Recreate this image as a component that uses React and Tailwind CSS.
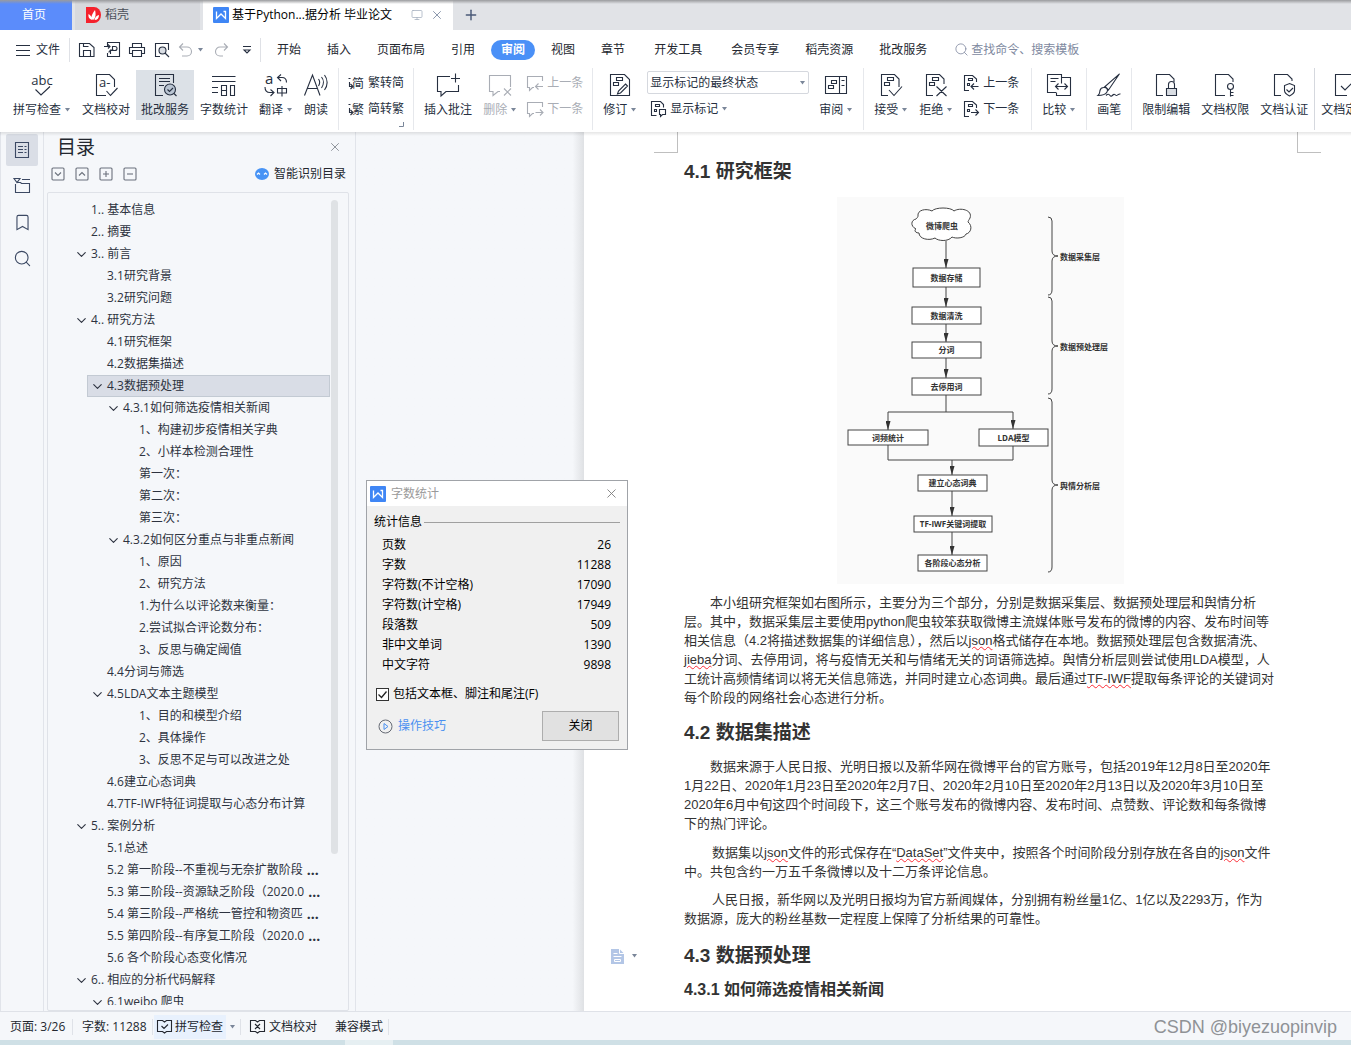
import React from "react";
import { X, Plus, Search, ChevronDown, Bookmark, Monitor } from "lucide-react";
import clsx from "clsx";

const OUTLINE = [
  { level: 1, text: "1.. 基本信息" },
  { level: 1, text: "2.. 摘要" },
  { level: 1, text: "3.. 前言", open: true },
  { level: 2, text: "3.1研究背景" },
  { level: 2, text: "3.2研究问题" },
  { level: 1, text: "4.. 研究方法", open: true },
  { level: 2, text: "4.1研究框架" },
  { level: 2, text: "4.2数据集描述" },
  { level: 2, text: "4.3数据预处理", open: true, selected: true },
  { level: 3, text: "4.3.1如何筛选疫情相关新闻", open: true },
  { level: 4, text: "1、构建初步疫情相关字典" },
  { level: 4, text: "2、小样本检测合理性" },
  { level: 4, text: "第一次：" },
  { level: 4, text: "第二次：" },
  { level: 4, text: "第三次：" },
  { level: 3, text: "4.3.2如何区分重点与非重点新闻", open: true },
  { level: 4, text: "1、原因" },
  { level: 4, text: "2、研究方法" },
  { level: 4, text: "1.为什么以评论数来衡量：" },
  { level: 4, text: "2.尝试拟合评论数分布：" },
  { level: 4, text: "3、反思与确定阈值" },
  { level: 2, text: "4.4分词与筛选" },
  { level: 2, text: "4.5LDA文本主题模型", open: true },
  { level: 4, text: "1、目的和模型介绍" },
  { level: 4, text: "2、具体操作" },
  { level: 4, text: "3、反思不足与可以改进之处" },
  { level: 2, text: "4.6建立心态词典" },
  { level: 2, text: "4.7TF-IWF特征词提取与心态分布计算" },
  { level: 1, text: "5.. 案例分析", open: true },
  { level: 2, text: "5.1总述" },
  { level: 2, text: "5.2 第一阶段--不重视与无奈扩散阶段", more: true },
  { level: 2, text: "5.3 第二阶段--资源缺乏阶段（2020.0", more: true },
  { level: 2, text: "5.4 第三阶段--严格统一管控和物资匹", more: true },
  { level: 2, text: "5.5 第四阶段--有序复工阶段（2020.0", more: true },
  { level: 2, text: "5.6 各个阶段心态变化情况" },
  { level: 1, text: "6.. 相应的分析代码解释", open: true },
  { level: 2, text: "6.1weibo 爬虫", open: true },
];

const INDENT = {
  1: "ml-[23px]",
  2: "ml-[39px]",
  3: "ml-[55px]",
  4: "ml-[71px]",
};

const STATS = [
  ["页数", "26"],
  ["字数", "11288"],
  ["字符数(不计空格)", "17090"],
  ["字符数(计空格)", "17949"],
  ["段落数", "509"],
  ["非中文单词", "1390"],
  ["中文字符", "9898"],
];

const Svg = ({ size = 24, box = 24, children, className = "" }) => (
  <svg
    width={size}
    height={size}
    viewBox={`0 0 ${box} ${box}`}
    fill="none"
    stroke="currentColor"
    strokeWidth="1.1"
    className={clsx("shrink-0 overflow-visible", className)}
    aria-hidden="true"
  >
    {children}
  </svg>
);

const Caret = () => (
  <svg width="7" height="4" viewBox="0 0 7 4" className="ml-[3px] shrink-0" aria-hidden="true">
    <path d="M1 0h5L3.5 3.5z" fill="#7a8699" />
  </svg>
);

// Large ribbon icons, 24px grid
const SpellIcon = () => (
  <Svg>
    <text x="12" y="12" textAnchor="middle" fontSize="13" fill="currentColor" stroke="none">abc</text>
    <path d="M5.500 16.500l5.500 5.500 9-8.500" />
  </Svg>
);
const ProofIcon = () => (
  <Svg>
    <path d="M12 22.500H2.500v-21h13l5 5V14" />
    <text x="5" y="14" fontSize="13" fill="currentColor" stroke="none">a-</text>
    <path d="M12.500 18l4 4.500 7-7.500" />
  </Svg>
);
const ReviewServiceIcon = () => (
  <Svg>
    <path d="M10 22.500H2.500v-21h18V10M6 5.500h11M6 8.500h11M6 12.500h5" />
    <circle cx="17" cy="16.500" r="5.500" fill="#b9c4d2" />
    <path d="M14.500 16.500l2 2 3.500-3.500M21 20.500l2.500 2.500" />
  </Svg>
);
const CountIcon = () => (
  <Svg>
    <path d="M0 3.500h23.500M0 8.500h23.500M0 14.500h6M0 19.500h6M9.500 12v10.500h5V12.500h-5M9.500 17.500h5M18.500 12.500h4v10h-4z" />
  </Svg>
);
const TranslateIcon = () => (
  <Svg>
    <text x="1" y="11" fontSize="15" fill="currentColor" stroke="none">a</text>
    <path d="M17 1.500l-3.500 3 3.500 3.500M13.500 4.500h4.500c3 0 4.500 2 4.500 5M1 14c0 4 2 5.500 5 5.500h3.500M6.500 16.500l3.500 3-3.500 3.500M13.500 15.500h9v4.500h-9zM18 13v10.500" />
  </Svg>
);
const ReadIcon = () => (
  <Svg>
    <path d="M.5 22.500L8.500 2l7.500 20.500M3.500 15.500h10M14.500 6c1.500 2 1.500 4.500 0 7M17.500 4c2.500 3 2.500 7.500 0 11M20.500 2c3.500 4.500 3.500 10.500 0 15" />
  </Svg>
);
const AddCommentIcon = () => (
  <Svg>
    <path d="M14 3.500H1.500v15H5v4.500l5-4.500h12.500V12M19.500 .5v9M15 5.500h9" />
  </Svg>
);
const DeleteCommentIcon = () => (
  <Svg>
    <path d="M12 18.500h-2l-5 4v-4H1.500v-16h21V14M16 15.500l7 7M23 15.500l-7 7" />
  </Svg>
);
const TrackIcon = () => (
  <Svg>
    <path d="M21.500 12V6.500l-5-5h-14v21h19V12M8.500 4.500h6v3h-6zM5.500 9.500h5v3h-5zM17.500 11l2 2-7 7-3 1 1-3z" />
  </Svg>
);
const PaneIcon = () => (
  <Svg>
    <path d="M1.500 3.500h21v17h-21zM15.500 3.500v17M7.500 7.500h5v3h-5zM4.500 12.500h5v3h-5zM17.500 7.500h3M17.500 12.500h3" />
  </Svg>
);
const AcceptIcon = () => (
  <Svg>
    <path d="M9 22.500H2.500v-21h13l4.500 4.500v8M8.500 4.500h6v3h-6zM5.500 9.500h5v3h-5zM10 17l5 5.500 8-9" />
  </Svg>
);
const RejectIcon = () => (
  <Svg>
    <path d="M9 22.500H2.500v-21h13l4.500 4.500v5M8.500 4.500h6v3h-6zM5.500 9.500h5v3h-5zM12.500 13.500l10 9.500M22.500 13.500l-10 9.500" />
  </Svg>
);
const CompareIcon = () => (
  <Svg>
    <path d="M14.500 4.500V1.500H.5v18H9M9.500 19.500v3h14v-18h-9v6M3.500 5.500h8M3.500 8.500h5M8.500 13.500h12M11.500 10.500l-3 3 3 3M17.500 10.500l3 3-3 3" />
  </Svg>
);
const BrushIcon = () => (
  <Svg>
    <path d="M22.500.8L8 13.500l3.500 3.500zM6.500 14.500c3-.5 5 2 3.500 4.500-1.500 2.500-5 3.500-9 3.500 2-1.500 1.500-3 2-5 .4-1.700 1.800-2.800 3.500-3zM9 22.500c2-2 3-1.500 4 0s2.500 0 3.500-1 2 1 3 1 2-2 4-1.500" />
  </Svg>
);
const LockDocIcon = () => (
  <Svg>
    <path d="M9 22.500H2.500v-21h13l4.500 4.500v3" />
    <path d="M14.500 15v-3.500a3 3 0 016 0V15" />
    <path d="M12.500 15.500h10v7h-10z" fill="#d9dde3" />
  </Svg>
);
const KeyDocIcon = () => (
  <Svg>
    <path d="M12 22.500H2.500v-21h13l4.500 4.500v3" />
    <circle cx="17.500" cy="13.500" r="3" />
    <path d="M17.500 16.500v7M17.500 19.500h3M17.500 22.500h3" />
  </Svg>
);
const ShieldDocIcon = () => (
  <Svg>
    <path d="M9 22.500H2.500v-21h13l4.500 4.500v2" />
    <path d="M17.500 10.500l5 2v5c0 2.500-2 4-5 5.500-3-1.500-5-3-5-5.500v-5zM14.500 16.500l2.500 2.500 4-4" />
  </Svg>
);
const FinalDocIcon = () => (
  <Svg>
    <path d="M14 22.500H2.500v-21h18M8 13l4 4 8-8" />
  </Svg>
);

// Small ribbon icons, 16px grid
const ConvertIcon = ({ label }) => (
  <Svg size={16} box={16}>
    <path d="M1.500 7v4.500H4M2.500 9l2.500 2.500-2.500 2.500M.5 3.500h2" />
    <text x="4" y="13" fontSize="12" fill="currentColor" stroke="none">{label}</text>
  </Svg>
);
const CommentPrevIcon = () => (
  <Svg size={16} box={16}>
    <path d="M15.500 6V1.500H.5v11h2v3l3-3h1.500M16 11.500H9M11.500 8.500l-3 3 3 3" />
  </Svg>
);
const CommentNextIcon = () => (
  <Svg size={16} box={16}>
    <path d="M15.500 6V1.500H.5v11h2v3l3-3h1.500M8.500 11.500H15.500M13 8.500l3 3-3 3" />
  </Svg>
);
const MarkupIcon = () => (
  <Svg size={16} box={16}>
    <path d="M6.500 14.500h-5v-14h9l3 3v3M5.500 3.500h4v2h-4zM4.500 8.500h2v2h-2zM9.500 8.500h6v5h-3l-2 2v-2h-1z" />
  </Svg>
);
const ChangePrevIcon = () => (
  <Svg size={16} box={16}>
    <path d="M6 15.500H1.500v-15h8l4 3.500v3M5.500 3.500h4v2h-4zM4.500 8.500h2v2h-2zM15.500 11.500H8.500M11 8.500l-3 3 3 3" />
  </Svg>
);
const ChangeNextIcon = () => (
  <Svg size={16} box={16}>
    <path d="M6 15.500H1.500v-15h8l4 3.500v3M5.500 3.500h4v2h-4zM4.500 8.500h2v2h-2zM8 11.500h7M12.500 8.500l3 3-3 3" />
  </Svg>
);

const WpsLogo = () => (
  <svg width="16" height="16" viewBox="0 0 16 16" className="shrink-0" aria-hidden="true">
    <rect width="16" height="16" rx="1" fill="#3f86f5" />
    <path d="M3.500 4.500v7l4.500-4.500 4.500 4.500v-7h-2" fill="none" stroke="#fff" strokeWidth="1.300" />
  </svg>
);

const RibbonButton = ({ icon, label, caret, active, muted }) => (
  <button
    type="button"
    className={clsx(
      "flex h-[50px] shrink-0 flex-col items-center px-[5px] pt-[3px]",
      active && "bg-[#dce1e7]",
      muted && "text-[#a9adb5]"
    )}
  >
    {icon}
    <span className="mt-[5px] flex items-center leading-4 whitespace-nowrap">
      {label}
      {caret && <Caret />}
    </span>
  </button>
);

const SmallButton = ({ icon, label, caret, muted }) => (
  <button
    type="button"
    className={clsx("flex h-[26px] items-center gap-1 whitespace-nowrap", muted && "text-[#a9adb5]")}
  >
    {icon}
    <span className="flex items-center">
      {label}
      {caret && <Caret />}
    </span>
  </button>
);

const SmallColumn = ({ children }) => <div className="flex shrink-0 flex-col px-1">{children}</div>;

const Divider = () => <div className="mx-1 -mt-0.5 h-[62px] w-px shrink-0 bg-[#e6e8ec]" />;

const TabBar = () => (
  <div className="relative flex h-[30px] shrink-0 bg-[#e1e3e7]">
    <button type="button" className="w-[72px] bg-[#5b8cfb] pr-1 text-white">首页</button>
    <button type="button" className="ml-[3px] flex w-[125px] items-center gap-1 bg-[#d7d9dd] pl-[11px] text-[#4a4f59]">
      <svg width="15" height="16" viewBox="0 0 15 16" aria-hidden="true">
        <path d="M0 0h8a7 8 0 017 8 7 8 0 01-7 8H0z" fill="#f5222d" />
        <path d="M7 13C4 11 6 7 9 3c1 4 1 8-2 10zM6 13C3 12 2 10 2.500 7 4.500 8 6 10 6 13zM8.500 13c3 0 4.500-2 4.500-5-2 .5-4 2-4.500 5z" fill="#fff" />
      </svg>
      稻壳
    </button>
    <div className="ml-[3px] flex w-[250px] items-center bg-white pl-[10px]">
      <WpsLogo />
      <span className="ml-[3px] whitespace-nowrap text-black">基于Python...据分析 毕业论文</span>
      <Monitor size={12} strokeWidth={1.5} className="ml-auto text-[#a3adbd]" />
      <button type="button" aria-label="关闭标签" className="mr-[9px] ml-[7px] text-[#8c98ad]">
        <X size={14} strokeWidth={1.7} />
      </button>
    </div>
    <button type="button" aria-label="新建" className="ml-[10px] text-[#4a5a78]">
      <Plus size={16} strokeWidth={2.2} />
    </button>
    <div className="absolute inset-x-0 top-0 h-1 bg-linear-to-b from-[#9a9b9e] to-transparent" />
  </div>
);

const MenuBar = () => (
  <div className="flex h-9 shrink-0 items-center pt-[3px] whitespace-nowrap">
    <button type="button" className="ml-4 flex items-center gap-[6px]">
      <Svg size={14} box={14}>
        <path d="M0 2.500h14M0 7.500h14M0 12.500h14" />
      </Svg>
      文件
    </button>
    <div className="mx-[9px] h-6 w-px bg-[#dfe1e6]" />
    <div className="flex w-[181px] items-center">
      <button type="button" aria-label="保存">
        <Svg size={16} box={16}>
          <path d="M.5 14.500v-13h10l4.500 4v9zM4.500 14.500v-6h7v6M4.500 1.500v3h5" />
        </Svg>
      </button>
      <button type="button" aria-label="输出为PDF" className="ml-[9px]">
        <Svg size={16} box={16}>
          <path d="M3.500 4V.500h12v14h-12V11M0 4.500h6M4 2.500l2 2-2 2M6.500 12V8h3M8.500 9V4.500H11a2 2 0 010 4H7a2 2 0 00-2 2" />
        </Svg>
      </button>
      <button type="button" aria-label="打印" className="ml-[9px]">
        <Svg size={16} box={16}>
          <path d="M3.500 5V1.500h9V5M3.500 11.500H.5V5.500h15v6h-3M3.500 8.500h9v6h-9z" />
        </Svg>
      </button>
      <button type="button" aria-label="打印预览" className="ml-[9px]">
        <Svg size={16} box={16}>
          <path d="M6 14.500H1.500v-13h13V8" />
          <circle cx="8.500" cy="8.500" r="3.500" fill="#d9dde3" />
          <path d="M11 11l4 4" />
        </Svg>
      </button>
      <button type="button" aria-label="撤销" className="ml-2 flex items-center text-[#a9adb5]">
        <Svg size={16} box={16}>
          <path d="M5 1.500L1.500 5 5 8.500M1.500 5H9a4.500 4.500 0 010 9H4" />
        </Svg>
        <Caret />
      </button>
      <button type="button" aria-label="恢复" className="ml-[9px] text-[#a9adb5]">
        <Svg size={16} box={16}>
          <path d="M11 1.500L14.500 5 11 8.500M14.500 5H7a4.500 4.500 0 000 9h3" />
        </Svg>
      </button>
      <button type="button" aria-label="更多" className="ml-3.5">
        <Svg size={8} box={8}>
          <path d="M0 .5h8M1 4h6L4 7z" />
        </Svg>
      </button>
    </div>
    <div className="h-6 w-px bg-[#dfe1e6]" />
    <nav className="ml-4 flex items-center gap-[26px] text-[#23272f]">
      <button type="button">开始</button>
      <button type="button">插入</button>
      <button type="button">页面布局</button>
      <button type="button">引用</button>
      <button type="button" className="-mx-2.5 h-5 rounded-full bg-[#4a90f7] px-2.5 font-bold text-white">审阅</button>
      <button type="button">视图</button>
      <button type="button">章节</button>
      <button type="button" className="ml-[3px]">开发工具</button>
      <button type="button" className="ml-[3px]">会员专享</button>
      <button type="button">稻壳资源</button>
      <button type="button">批改服务</button>
    </nav>
    <label className="ml-[27px] flex flex-1 items-center gap-0.5 text-[#8089a0]">
      <Search size={15} strokeWidth={1.3} />
      <input
        type="text"
        aria-label="查找命令"
        placeholder="查找命令、搜索模板"
        className="w-32 bg-transparent outline-none placeholder:text-[#8089a0]"
      />
    </label>
  </div>
);

const Ribbon = () => (
  <div className="flex h-[66px] shrink-0 gap-px overflow-hidden pt-1 pl-2 text-[#262f40]">
    <RibbonButton icon={<SpellIcon />} label="拼写检查" caret />
    <RibbonButton icon={<ProofIcon />} label="文档校对" />
    <RibbonButton icon={<ReviewServiceIcon />} label="批改服务" active />
    <RibbonButton icon={<CountIcon />} label="字数统计" />
    <RibbonButton icon={<TranslateIcon />} label="翻译" caret />
    <RibbonButton icon={<ReadIcon />} label="朗读" />
    <Divider />
    <SmallColumn>
      <SmallButton icon={<ConvertIcon label="简" />} label="繁转简" />
      <SmallButton icon={<ConvertIcon label="繁" />} label="简转繁" />
      <svg width="5" height="5" viewBox="0 0 5 5" className="self-end" aria-hidden="true">
        <path d="M0 4.500h4.500V0" fill="none" stroke="#7a8699" />
      </svg>
    </SmallColumn>
    <Divider />
    <RibbonButton icon={<AddCommentIcon />} label="插入批注" />
    <RibbonButton icon={<DeleteCommentIcon />} label="删除" caret muted />
    <SmallColumn>
      <SmallButton icon={<CommentPrevIcon />} label="上一条" muted />
      <SmallButton icon={<CommentNextIcon />} label="下一条" muted />
    </SmallColumn>
    <Divider />
    <RibbonButton icon={<TrackIcon />} label="修订" caret />
    <SmallColumn>
      <div className="relative mt-px flex w-[162px] items-center">
        <select
          aria-label="显示标记状态"
          className="h-[23px] w-full appearance-none rounded-xs border border-[#d5d8de] bg-white pl-0.5 outline-none"
        >
          <option>显示标记的最终状态</option>
        </select>
        <span className="pointer-events-none absolute right-[3px]">
          <Caret />
        </span>
      </div>
      <div className="mt-0.5 ml-[3px] flex">
        <SmallButton icon={<MarkupIcon />} label="显示标记" caret />
      </div>
    </SmallColumn>
    <RibbonButton icon={<PaneIcon />} label="审阅" caret />
    <Divider />
    <RibbonButton icon={<AcceptIcon />} label="接受" caret />
    <RibbonButton icon={<RejectIcon />} label="拒绝" caret />
    <SmallColumn>
      <SmallButton icon={<ChangePrevIcon />} label="上一条" />
      <SmallButton icon={<ChangeNextIcon />} label="下一条" />
    </SmallColumn>
    <div className="w-0.5 shrink-0" />
    <Divider />
    <RibbonButton icon={<CompareIcon />} label="比较" caret />
    <Divider />
    <RibbonButton icon={<BrushIcon />} label="画笔" />
    <Divider />
    <RibbonButton icon={<LockDocIcon />} label="限制编辑" />
    <RibbonButton icon={<KeyDocIcon />} label="文档权限" />
    <RibbonButton icon={<ShieldDocIcon />} label="文档认证" />
    <div className="-mt-0.5 h-[62px] w-px shrink-0 bg-[#d5d8de]" />
    <RibbonButton icon={<FinalDocIcon />} label="文档定稿" />
  </div>
);

const IconRail = () => (
  <div className="flex w-11 shrink-0 flex-col items-center gap-1 border-r border-l border-[#e1e4ea] pt-0.5 text-[#3c4963]">
    <button type="button" aria-label="目录" className="flex size-8 items-center justify-center rounded-xs bg-[#dadee6]">
      <Svg size={16} box={16}>
        <path d="M1.500.5h13v15h-13zM4 4.500h5M4 7.500h5M4 10.500h5M10.500 4.500h2M10.500 7.500h2M10.500 10.500h2" />
      </Svg>
    </button>
    <button type="button" aria-label="章节" className="flex size-8 items-center justify-center">
      <Svg size={16} box={16}>
        <path d="M0 .5h6L3 4.500zM8 1.500h8M1.500 6v8.500h14V5.500h-8l-1-1h-3" />
      </Svg>
    </button>
    <button type="button" aria-label="书签" className="flex size-8 items-center justify-center">
      <Bookmark size={19} strokeWidth={1.4} strokeLinejoin="miter" />
    </button>
    <button type="button" aria-label="查找" className="flex size-8 items-center justify-center">
      <Search size={19} strokeWidth={1.4} />
    </button>
  </div>
);

const OUTLINE_TOOLS = [
  ["展开", "M4 5.500L7 8.500l3-3"],
  ["收起", "M4 8.500L7 5.500l3 3"],
  ["增加", "M7 4v6M4 7h6"],
  ["减少", "M4 7h6"],
];

const OutlinePanel = () => (
  <aside className="flex w-[312px] shrink-0 flex-col border-r border-[#e1e4ea] pr-1.5 pl-[3px]">
    <div className="flex h-7 items-center justify-between pt-0.5 pr-[7px] pl-[10px]">
      <h2 className="text-[19px] leading-7 text-[#23272f]">目录</h2>
      <button type="button" aria-label="关闭目录" className="text-[#7a7f88]">
        <X size={14} strokeWidth={1.4} />
      </button>
    </div>
    <div className="flex h-8 items-center gap-[10px] pb-1 pl-1 text-[#6b717c]">
      {OUTLINE_TOOLS.map(([name, d]) => (
        <button key={name} type="button" aria-label={name}>
          <Svg size={14} box={14}>
            <rect x="1" y="1" width="12" height="12" rx="1" />
            <path d={d} />
          </Svg>
        </button>
      ))}
      <button type="button" className="mr-[3px] ml-auto flex items-center gap-[5px] text-[#23272f]">
        <svg width="14" height="12" viewBox="0 0 14 12" aria-hidden="true">
          <ellipse cx="7" cy="6" rx="7" ry="6" fill="#4793f5" />
          <path d="M2 6.500l1.500-1.500L5 6.500M9 6.500L10.500 5 12 6.500" fill="none" stroke="#fff" strokeWidth="1.200" />
        </svg>
        智能识别目录
      </button>
    </div>
    <div className="flex min-h-0 flex-1 rounded-xs border border-[#dfe2e8] pt-1.5 pb-[5px]">
      <ul className="min-w-0 flex-1 overflow-hidden text-[#2d3340]">
        {OUTLINE.map((row, i) => (
          <li key={i} className={INDENT[row.level]}>
            <button
              type="button"
              className={clsx(
                "flex h-[22px] w-full items-center text-left whitespace-nowrap",
                row.selected && "bg-[#d9dde6] outline-1 -outline-offset-1 outline-[#c3cad3]"
              )}
            >
              <span className="flex w-5 shrink-0 justify-center">
                {row.open && <ChevronDown size={15} strokeWidth={1.8} />}
              </span>
              {row.text}
              {row.more && <span className="ml-1 text-sm font-bold">...</span>}
            </button>
          </li>
        ))}
      </ul>
      <div className="mt-px mr-[10px] ml-px h-[654px] w-[7px] rounded-full bg-[#dfe2e5]" />
    </div>
  </aside>
);

const CountDialog = () => (
  <div
    role="dialog"
    aria-label="字数统计"
    className="absolute top-[348px] left-[10px] w-[262px] border border-[#a0a3a8] bg-[#f0f0f0] text-black"
  >
    <div className="flex h-[25px] items-center bg-white pr-2 pl-[3px]">
      <WpsLogo />
      <span className="ml-[5px] text-[#9a9a9a]">字数统计</span>
      <button type="button" aria-label="关闭" className="ml-auto text-[#7a7a7a]">
        <X size={15} strokeWidth={1.4} />
      </button>
    </div>
    <div className="flex items-center gap-0.5 pt-[6px] pr-[7px] pl-[7px]">
      <span className="leading-5">统计信息</span>
      <div className="h-px flex-1 bg-[#a0a0a0]" />
    </div>
    <table className="mt-[3px] w-full">
      <tbody>
        {STATS.map(([name, value]) => (
          <tr key={name} className="h-5 leading-5">
            <th scope="row" className="pl-[15px] text-left font-normal">{name}</th>
            <td className="pr-4 text-right">{value}</td>
          </tr>
        ))}
      </tbody>
    </table>
    <label className="mt-[9px] flex h-5 items-center gap-1 pl-[9px]">
      <span className="relative flex">
        <input
          type="checkbox"
          defaultChecked
          className="peer size-[13px] appearance-none border border-[#333] bg-white"
        />
        <svg width="13" height="13" viewBox="0 0 13 13" className="pointer-events-none absolute hidden peer-checked:block" aria-hidden="true">
          <path d="M2.500 6.500L5.500 9.500l5-6" fill="none" stroke="#222" strokeWidth="1.300" />
        </svg>
      </span>
      包括文本框、脚注和尾注(F)
    </label>
    <div className="mt-[7px] mb-2 flex items-center justify-between pr-2 pl-[11px]">
      <a href="#tips" className="flex items-center gap-[5px] text-[#4a90f0]">
        <svg width="15" height="15" viewBox="0 0 15 15" fill="none" aria-hidden="true">
          <circle cx="7.500" cy="7.500" r="6.500" stroke="#666b75" />
          <path d="M6 4.500l4 3-4 3z" stroke="#4a90f0" />
        </svg>
        操作技巧
      </a>
      <button type="button" className="h-[30px] w-[77px] border border-[#adadad] bg-[#e1e1e1]">关闭</button>
    </div>
  </div>
);

const NODES = [
  [76, 71, 67, 19, "数据存储"],
  [75, 110, 69, 17, "数据清洗"],
  [75, 145, 69, 16, "分词"],
  [75, 181, 69, 17, "去停用词"],
  [11, 233, 80, 15, "词频统计"],
  [142, 232, 69, 17, "LDA模型"],
  [81, 278, 69, 16, "建立心态词典"],
  [77, 319, 78, 16, "TF-IWF关键词提取"],
  [81, 358, 69, 16, "各阶段心态分析"],
];

const ARROWS = [
  "M109 44V71",
  "M109 90V110",
  "M109 127V145",
  "M109 161V181",
  "M109 215H51V233",
  "M109 198V215H176V232",
  "M51 248V263H115V278",
  "M115 294V319",
  "M115 335V358",
];

const Flowchart = () => (
  <svg
    width="287"
    height="387"
    viewBox="0 0 287 387"
    className="bg-[#fafafa] font-['Open_Sans','Noto_Sans_CJK_SC',sans-serif]"
    role="img"
    aria-label="研究框架图"
  >
    <defs>
      <marker id="arrow" viewBox="0 0 9 5" refX="9" refY="2.500" markerWidth="9" markerHeight="5" markerUnits="userSpaceOnUse" orient="auto">
        <path d="M0 0L9 2.500 0 5z" fill="#333" />
      </marker>
    </defs>
    <g fill="none" stroke="#444">
      {ARROWS.map((d) => (
        <path key={d} d={d} markerEnd="url(#arrow)" />
      ))}
      <path d="M176 249V263H115" />
      <path
        d="M81 19C80 13 89 11 95 14C98 10 114 10 117 14C123 10 136 13 133 21C132 23 131 24 131 25C136 29 134 36 129 37C128 41 119 42 115 40C111 45 101 44 98 41C92 44 82 42 82 36C78 36 77 33 79 32C73 29 74 23 79 22C80 21 81 20 81 19z"
        fill="#fff"
      />
      <path d="M211 20q4 0 4 4v30q0 5 6 5q-6 0-6 5v29q0 5-4 5" />
      <path d="M211 100q4 0 4 4v40q0 5 6 5q-6 0-6 5v38q0 5-4 5" />
      <path d="M211 201q4 0 4 4v78q0 5 6 5q-6 0-6 5v77q0 5-4 5" />
    </g>
    <g fontSize="8" fontWeight="bold" fill="#333" textAnchor="middle">
      <text x="105" y="32">微博爬虫</text>
      {NODES.map(([x, y, w, h, label]) => (
        <g key={label}>
          <rect x={x} y={y} width={w} height={h} fill="#fff" stroke="#444" />
          <text x={x + w / 2} y={y + h / 2 + 3}>{label}</text>
        </g>
      ))}
    </g>
    <g fontSize="8" fontWeight="bold" fill="#333">
      <text x="223" y="63">数据采集层</text>
      <text x="223" y="153">数据预处理层</text>
      <text x="223" y="292">舆情分析层</text>
    </g>
  </svg>
);

const Typo = ({ children }) => (
  <span className="underline decoration-red-500 decoration-wavy decoration-1 underline-offset-1">{children}</span>
);

const Document = () => (
  <article className="relative min-w-0 flex-1 overflow-hidden bg-white pl-[100px] font-['Liberation_Sans','Noto_Sans_CJK_SC',sans-serif] text-[13px] leading-[19px] whitespace-nowrap text-[#333]">
    <div className="absolute top-0 left-[70px] h-[21px] w-6 border-r border-b border-[#bfbfbf]" />
    <div className="absolute top-0 right-[30px] h-[21px] w-6 border-b border-l border-[#bfbfbf]" />

    <h2 className="mt-[26px] text-[19px] leading-7 font-bold">4.1 研究框架</h2>
    <div className="mt-[11px] ml-[153px]">
      <Flowchart />
    </div>
    <p className="mt-[9px] indent-[26px]">
      本小组研究框架如右图所示，主要分为三个部分，分别是数据采集层、数据预处理层和舆情分析<br />
      层。其中，数据采集层主要使用python爬虫较笨获取微博主流媒体账号发布的微博的内容、发布时间等<br />
      相关信息（4.2将描述数据集的详细信息），然后以<Typo>json</Typo>格式储存在本地。数据预处理层包含数据清洗、<br />
      <Typo>jieba</Typo>分词、去停用词，将与疫情无关和与情绪无关的词语筛选掉。舆情分析层则尝试使用LDA模型，人<br />
      工统计高频情绪词以将无关信息筛选，并同时建立心态词典。最后通过<Typo>TF-IWF</Typo>提取每条评论的关键词对<br />
      每个阶段的网络社会心态进行分析。
    </p>
    <h2 className="mt-3 text-[19px] leading-7 font-bold">4.2 数据集描述</h2>
    <p className="mt-[10px] indent-[26px]">
      数据来源于人民日报、光明日报以及新华网在微博平台的官方账号，包括2019年12月8日至2020年<br />
      1月22日、2020年1月23日至2020年2月7日、2020年2月10日至2020年2月13日以及2020年3月10日至<br />
      2020年6月中旬这四个时间段下，这三个账号发布的微博内容、发布时间、点赞数、评论数和每条微博<br />
      下的热门评论。
    </p>
    <p className="mt-[10px] indent-7">
      数据集以<Typo>json</Typo>文件的形式保存在“<Typo>DataSet</Typo>”文件夹中，按照各个时间阶段分别存放在各自的<Typo>json</Typo>文件<br />
      中。共包含约一万五千条微博以及十二万条评论信息。
    </p>
    <p className="mt-[9px] indent-7">
      人民日报，新华网以及光明日报均为官方新闻媒体，分别拥有粉丝量1亿、1亿以及2293万，作为<br />
      数据源，庞大的粉丝基数一定程度上保障了分析结果的可靠性。
    </p>
    <div className="mt-[14px] -ml-[73px] flex items-center">
      <svg width="13" height="15" viewBox="0 0 13 15" aria-hidden="true">
        <path d="M0 0h8.500L13 4.500V15H0z" fill="#b3c6e6" />
        <path d="M8.500 0v4.500H13M2.500 4.500h4M2.500 7.500h8M3.500 10.500h6v2h-6z" fill="none" stroke="#fff" />
      </svg>
      <span className="ml-1 flex w-[56px]">
        <Caret />
      </span>
      <h2 className="text-[19px] leading-7 font-bold">4.3 数据预处理</h2>
    </div>
    <h3 className="mt-2 text-base leading-6 font-bold">4.3.1 如何筛选疫情相关新闻</h3>
  </article>
);

const StatusBar = () => (
  <footer className="flex h-[29px] shrink-0 items-center border-t border-[#dfe2e8] bg-[#f5f7fa] pt-px whitespace-nowrap text-[#23272f]">
    <span className="w-[73px] border-r border-[#dfe2e8] pl-[10px]">页面: 3/26</span>
    <span className="w-20 border-r border-[#dfe2e8] pl-[9px]">字数: 11288</span>
    <button type="button" className="ml-px flex h-6 items-center gap-[3px] bg-[#e8f1fd] px-[3px]">
      <Svg size={15} box={15}>
        <path d="M5.500 1.500h-5v11h5l2 1.500 2-1.500h5v-11h-5l-2 1.500zM4.500 7l2.500 2.500 4-4" />
      </Svg>
      拼写检查
    </button>
    <Caret />
    <button type="button" className="ml-1 flex items-center gap-1 border-l border-[#dfe2e8] pl-[9px]">
      <Svg size={15} box={15}>
        <path d="M5.500 1.500h-5v11h5l2 1.500 2-1.500h5v-11h-5l-2 1.500zM5 5l5 5M10 5l-5 5" />
      </Svg>
      文档校对
    </button>
    <span className="ml-[18px] border-r border-[#dfe2e8] pr-[5px]">兼容模式</span>
    <span className="mr-[14px] ml-auto font-['Liberation_Sans',sans-serif] text-lg text-[#8f9296]">
      CSDN @biyezuopinvip
    </span>
  </footer>
);

export default function App() {
  return (
    <div className="flex h-screen flex-col overflow-hidden bg-white font-['Open_Sans','Noto_Sans_CJK_SC',sans-serif] text-xs text-[#262f40]">
      <TabBar />
      <MenuBar />
      <Ribbon />
      <main className="relative flex min-h-0 flex-1 bg-[#f5f7fa]">
        <IconRail />
        <OutlinePanel />
        <section className="relative flex min-w-0 flex-1">
          <div className="w-[228px] shrink-0 bg-linear-to-r from-[#f5f7fa] from-95% to-[#dfe1e4]" />
          <Document />
          <CountDialog />
        </section>
        <div className="absolute inset-x-0 top-0 h-1 bg-linear-to-b from-black/10 to-transparent" />
      </main>
      <StatusBar />
      <div className="h-[5px] shrink-0 bg-[#cfe0e6]">
        <div className="ml-[345px] h-full w-12 bg-[#e6eff2]" />
      </div>
    </div>
  );
}
